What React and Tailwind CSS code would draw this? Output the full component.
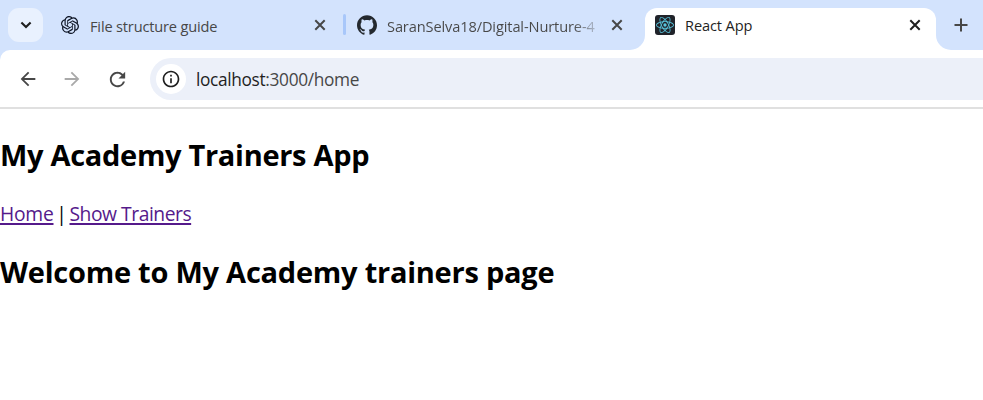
import { SiOpenai, SiGithub, SiReact } from "react-icons/si";
import { MdArrowBack, MdArrowForward, MdRefresh, MdInfoOutline } from "react-icons/md";

function Cross({ className = "" }) {
  return (
    <svg viewBox="0 0 12 12" className={`size-3 shrink-0 ${className}`} fill="none" stroke="currentColor" strokeWidth="2">
      <path d="M1.3 1.3 10.7 10.7M10.7 1.3 1.3 10.7" />
    </svg>
  );
}

function TabStrip() {
  return (
    <header className="flex h-[50px] bg-[#d3e3fd] text-[14.6px] leading-5 text-[#474747]">
      <button className="ml-2 mt-2 flex h-[34px] w-[35px] shrink-0 items-center justify-center rounded-[11px] bg-[#e9f1fe] text-[#1f1f1f]">
        <svg viewBox="0 0 12 8" className="h-2 w-3" fill="none" stroke="currentColor" strokeWidth="2.1">
          <path d="M1.4 1.4 6 6 10.6 1.4" />
        </svg>
      </button>

      <div className="ml-[18px] flex w-[265px] shrink-0 items-center">
        <SiOpenai className="size-[18px] shrink-0 text-[#0d1424]" />
        <span className="ml-[11px] w-[224px] shrink-0 whitespace-nowrap pt-px tracking-[-0.17px]">File structure guide</span>
        <Cross />
      </div>

      <div className="ml-[17px] mt-[14px] h-[21px] w-[3px] shrink-0 rounded-full bg-[#a8c7fa]" />

      <div className="ml-[11px] flex w-[272px] shrink-0 items-center">
        <SiGithub className="size-5 shrink-0 text-[#24292f]" />
        <span className="ml-[10px] w-[211px] shrink-0 whitespace-nowrap bg-gradient-to-r from-[#474747] from-88% to-[#d3e3fd] to-102% bg-clip-text pt-px tracking-[-0.12px] text-transparent">
          SaranSelva18/Digital-Nurture-4
        </span>
        <Cross className="ml-[13px]" />
      </div>

      <div className="ml-px h-[15px] w-[15px] shrink-0 self-end bg-white">
        <div className="h-full w-full rounded-br-[15px] bg-[#d3e3fd]" />
      </div>
      <div className="mt-[7.5px] flex w-[290.5px] shrink-0 items-start rounded-t-xl bg-white pl-[10px] pt-[7.5px] text-[#1f1f1f]">
        <span className="flex size-5 shrink-0 items-center justify-center rounded-[3px] bg-[#20232a]">
          <SiReact className="size-[18px] text-[#58c4dc]" />
        </span>
        <span className="ml-[10px] w-[224px] shrink-0 tracking-[-0.12px]">React App</span>
        <Cross className="mt-1" />
      </div>
      <div className="h-[15px] w-[15px] shrink-0 self-end bg-white">
        <div className="h-full w-full rounded-bl-[15px] bg-[#d3e3fd]" />
      </div>
      <svg viewBox="0 0 14 14" className="ml-[3.5px] mt-[18px] size-[14px] shrink-0" fill="none" stroke="currentColor" strokeWidth="2">
        <path d="M7 .5V13.5M.5 7H13.5" />
      </svg>
    </header>
  );
}

function Toolbar() {
  return (
    <div className="bg-[#d3e3fd]">
      <div className="flex h-[59px] items-start rounded-tl-[10px] border-b-2 border-[#e0e0e0] bg-white pt-2 text-[#474747]">
        <div className="flex h-[42px] shrink-0 items-center">
          <MdArrowBack className="ml-[17px] size-[22px]" />
          <MdArrowForward className="ml-[22px] size-[22px] text-[#a9a9a9]" />
          <MdRefresh className="ml-[23px] size-[23px]" />
        </div>
        <div className="ml-[21px] flex h-[42px] flex-1 items-center rounded-l-full bg-[#ecf0f9]">
          <span className="ml-[6px] flex size-[30px] shrink-0 items-center justify-center rounded-full bg-white">
            <MdInfoOutline className="size-5 text-[#1f1f1f]" />
          </span>
          <span className="ml-[10px] pt-px text-[17.3px] leading-6 tracking-[-0.34px]">
            <span className="text-[#1f1f1f]">localhost</span>:3000/home
          </span>
        </div>
      </div>
    </div>
  );
}

export default function App() {
  return (
    <div className="h-[400px] w-[983px] overflow-hidden bg-white font-['Open_Sans','Noto_Sans',sans-serif]">
      <TabStrip />
      <Toolbar />
      <main className="text-black">
        <h2 className="mt-[26px] text-[29px] font-bold leading-10 tracking-[-0.3px]">My Academy Trainers App</h2>
        <nav className="mt-[25px] flex text-[19.3px] leading-7">
          <a className="tracking-[-0.25px] text-[#551a8b] underline decoration-2 underline-offset-2">Home</a>
          <span className="w-4 text-center">|</span>
          <a className="tracking-[-0.47px] text-[#551a8b] underline decoration-2 underline-offset-2">Show Trainers</a>
        </nav>
        <h2 className="mt-6 text-[29px] font-bold leading-10 tracking-[-0.24px]">Welcome to My Academy trainers page</h2>
      </main>
    </div>
  );
}
